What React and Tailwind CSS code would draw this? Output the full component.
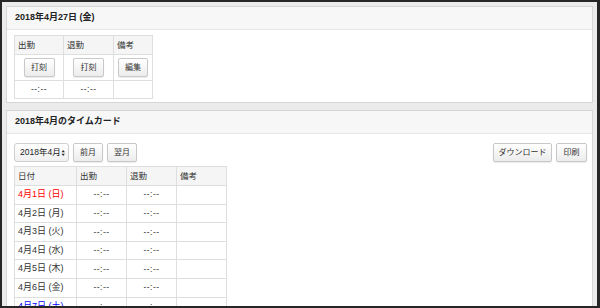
import React from 'react';

const font = { fontFamily: '"Liberation Sans", "Noto Sans CJK JP", sans-serif' };

const Btn = ({ children, className = 'px-[8px]' }) => (
    <button className={'h-[19px] whitespace-nowrap rounded-[2px] border border-[#c8c8c8] bg-gradient-to-b from-white to-[#ececec] shadow-[0_1px_1px_rgba(0,0,0,0.08)] text-[8px] text-[#333] leading-none ' + className}>
        {children}
    </button>
);

const days = [
    { label: '4月1日 (日)', color: 'text-[#f00]' },
    { label: '4月2日 (月)', color: 'text-[#333]' },
    { label: '4月3日 (火)', color: 'text-[#333]' },
    { label: '4月4日 (水)', color: 'text-[#333]' },
    { label: '4月5日 (木)', color: 'text-[#333]' },
    { label: '4月6日 (金)', color: 'text-[#333]' },
    { label: '4月7日 (土)', color: 'text-[#00f]' },
];

const Panel = ({ title, children, className = '' }) => (
    <div className={'bg-white border border-[#d6d6d6] ' + className}>
        <div className="h-[23px] bg-[#f7f7f7] border-b border-[#e6e6e6] px-[8px] flex items-center text-[9px] font-bold text-[#222]">
            {title}
        </div>
        {children}
    </div>
);

const App = () => {
    return (
        <div style={font} className="w-[600px] h-[308px] bg-[#262626] pl-[2px] pt-[2px] pr-[3px] pb-[2px] overflow-hidden">
            <div className="h-full bg-[#ebebeb] px-[4px] pt-[4px] overflow-hidden">
                <Panel title="2018年4月27日 (金)" className="h-[97px]">
                    <div className="pl-[7px] pt-[5px]">
                        <table className="border-collapse text-[8.5px] text-[#333]">
                            <thead>
                                <tr className="bg-[#f5f5f5] h-[19px]">
                                    <th className="w-[49px] border border-[#dedede] text-left font-normal pl-[3px]">出勤</th>
                                    <th className="w-[50px] border border-[#dedede] text-left font-normal pl-[3px]">退勤</th>
                                    <th className="w-[39px] border border-[#dedede] text-left font-normal pl-[3px]">備考</th>
                                </tr>
                            </thead>
                            <tbody>
                                <tr className="h-[26px]">
                                    <td className="border border-[#dedede] text-center"><Btn className="w-[31px]">打刻</Btn></td>
                                    <td className="border border-[#dedede] text-center"><Btn className="w-[31px]">打刻</Btn></td>
                                    <td className="border border-[#dedede] text-center"><Btn className="w-[30px]">編集</Btn></td>
                                </tr>
                                <tr className="h-[18px]">
                                    <td className="border border-[#dedede] text-center tracking-[0.5px]">--:--</td>
                                    <td className="border border-[#dedede] text-center tracking-[0.5px]">--:--</td>
                                    <td className="border border-[#dedede]"></td>
                                </tr>
                            </tbody>
                        </table>
                    </div>
                </Panel>

                <Panel title="2018年4月のタイムカード" className="mt-[7px] h-[300px]">
                    <div className="pl-[7px] pr-[5px] pt-[9px]">
                        <div className="flex items-center">
                            <div className="h-[19px] w-[55px] rounded-[3px] border border-[#cfcfcf] bg-gradient-to-b from-white to-[#f0f0f0] flex items-center justify-between pl-[5px] pr-[3px] text-[8.5px] text-[#222]">
                                <span className="whitespace-nowrap">2018年4月</span>
                                <svg width="5" height="8" viewBox="0 0 5 8">
                                    <path d="M2.5 0.5 L4.5 3 L0.5 3 Z M2.5 7.5 L4.5 5 L0.5 5 Z" fill="#333" />
                                </svg>
                            </div>
                            <Btn className="ml-[4px] w-[30px]">前月</Btn>
                            <Btn className="ml-[4px] w-[30px]">翌月</Btn>
                            <div className="flex-1" />
                            <Btn className="w-[59px]">ダウンロード</Btn>
                            <Btn className="ml-[4px] w-[31px]">印刷</Btn>
                        </div>
                        <table className="mt-[4px] border-collapse text-[8.5px] text-[#333]">
                            <thead>
                                <tr className="bg-[#f5f5f5] h-[19px]">
                                    <th className="w-[62px] border border-[#dedede] text-left font-normal pl-[3px]">日付</th>
                                    <th className="w-[50px] border border-[#dedede] text-left font-normal pl-[3px]">出勤</th>
                                    <th className="w-[50px] border border-[#dedede] text-left font-normal pl-[3px]">退勤</th>
                                    <th className="w-[50px] border border-[#dedede] text-left font-normal pl-[3px]">備考</th>
                                </tr>
                            </thead>
                            <tbody>
                                {days.map(day => (
                                    <tr key={day.label} className="h-[18.6px]">
                                        <td className={'border border-[#dedede] pl-[3px] text-[9px] ' + day.color}>{day.label}</td>
                                        <td className="border border-[#dedede] text-center tracking-[0.5px]">--:--</td>
                                        <td className="border border-[#dedede] text-center tracking-[0.5px]">--:--</td>
                                        <td className="border border-[#dedede]"></td>
                                    </tr>
                                ))}
                            </tbody>
                        </table>
                    </div>
                </Panel>
            </div>
        </div>
    );
};

export default App;
